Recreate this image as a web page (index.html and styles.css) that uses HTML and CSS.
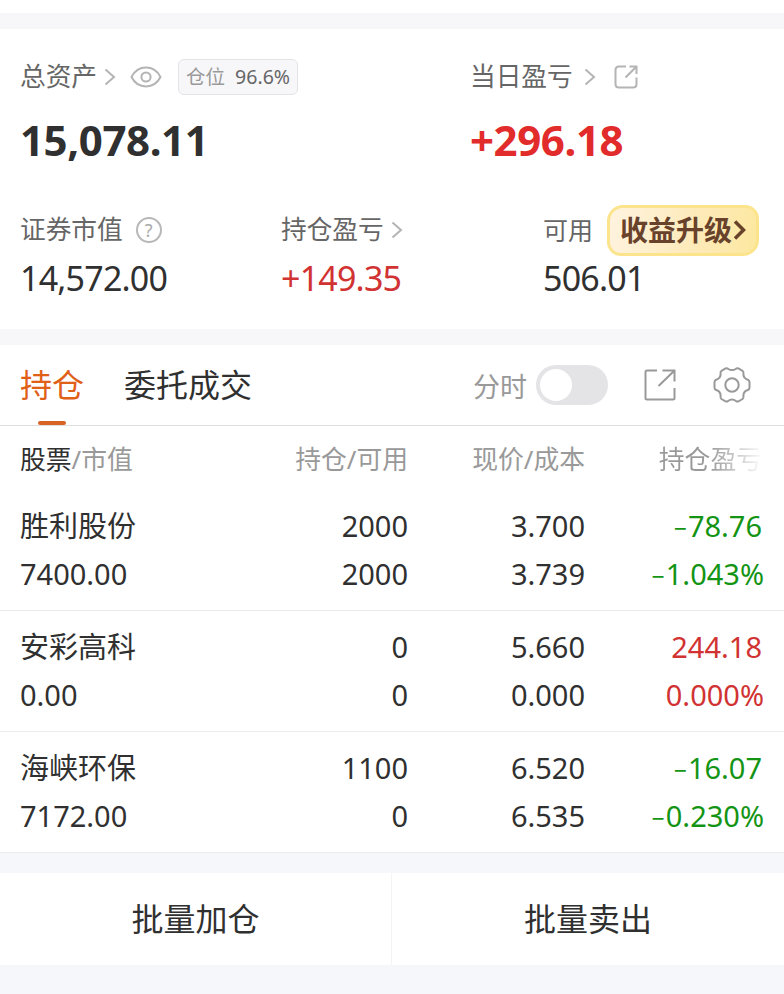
FILE: index.html
```html
<!DOCTYPE html>
<html lang="zh-CN">
<head>
    <meta charset="UTF-8">
    <meta name="viewport" content="width=device-width, initial-scale=1.0">
    <title>持仓</title>
    <link rel="stylesheet" href="styles.css">
</head>
<body>
    <div class="gap gap-top"></div>

    <!-- Account summary -->
    <section class="assets">
        <div class="summary summary-main">
            <div class="item">
                <div class="label">
                    <span>总资产</span>
                    <svg class="arrow arrow-near" width="12" height="18" viewBox="0 0 12 18"><path d="M1.5 1.5 L10 9 L1.5 16.5"/></svg>
                    <svg class="eye" width="32" height="22" viewBox="0 0 32 22"><path d="M1.500 11 C8 -1.600 24 -1.600 30.500 11 C24 23.600 8 23.600 1.500 11 Z"/><circle cx="16" cy="11" r="4.600"/></svg>
                    <span class="position"><span class="position-name">仓位</span>96.6%</span>
                </div>
                <div class="total">15,078.11</div>
            </div>
            <div class="item">
                <div class="label">
                    <span>当日盈亏</span>
                    <svg class="arrow arrow-far" width="12" height="18" viewBox="0 0 12 18"><path d="M1.5 1.5 L10 9 L1.5 16.5"/></svg>
                    <svg class="share" width="24" height="24" viewBox="0 0 24 24"><path d="M12 1.500 H5 Q1.500 1.500 1.500 5 V19 Q1.500 22.500 5 22.500 H19 Q22.500 22.500 22.500 19 V12.500 M15.500 1.500 H22.500 V9 M22 2 L11.500 12.500"/></svg>
                </div>
                <div class="total up">+296.18</div>
            </div>
        </div>
        <div class="summary summary-sub">
            <div class="item">
                <div class="label">
                    <span>证券市值</span>
                    <span class="help">?</span>
                </div>
                <div class="amount">14,572.00</div>
            </div>
            <div class="item">
                <div class="label">
                    <span>持仓盈亏</span>
                    <svg class="arrow arrow-near" width="12" height="18" viewBox="0 0 12 18"><path d="M1.5 1.5 L10 9 L1.5 16.5"/></svg>
                </div>
                <div class="amount amount-up">+149.35</div>
            </div>
            <div class="item">
                <div class="label">
                    <span class="available">可用</span>
                    <span class="upgrade">收益升级<svg width="13" height="22" viewBox="0 0 13 22"><path d="M2 2.500 L10.500 11 L2 19.500"/></svg></span>
                </div>
                <div class="amount">506.01</div>
            </div>
        </div>
    </section>

    <div class="gap"></div>

    <!-- Tabs -->
    <nav class="tabs">
        <div class="tab active">持仓</div>
        <div class="tab">委托成交</div>
        <div class="tools">
            <span>分时</span>
            <span class="switch"></span>
            <svg class="tool-share" width="32" height="32" viewBox="0 0 32 32"><path d="M13 1.500 H3 Q1.500 1.500 1.500 3 V29 Q1.500 30.500 3 30.500 H29 Q30.500 30.500 30.500 29 V19 M18.500 1.500 H30.500 V12.500 M30 2 L14.500 17"/></svg>
            <svg class="tool-gear" width="38" height="38" viewBox="0 0 38 38"><path d="M12.500 2.500 Q14 1.800 15 2.700 Q19 5.500 23 2.700 Q24 1.800 25.500 2.500 L29.500 4.800 Q30.800 5.500 30.400 7.200 Q30 12.500 34.800 13.700 Q36.500 14.300 36.500 16 L36.500 21.500 Q36.500 23.500 34.800 24 Q30 25.500 30.400 30.500 Q30.800 32.300 29.500 33 L25.500 35.300 Q24 36 23 35 Q19 32.200 15 35 Q14 36 12.500 35.300 L8.500 33 Q7.200 32.300 7.600 30.500 Q8 25.500 3.200 24 Q1.500 23.500 1.500 21.500 L1.500 16 Q1.500 14.300 3.200 13.700 Q8 12.500 7.600 7.200 Q7.200 5.500 8.500 4.800 Z"/><circle cx="19" cy="19" r="6.700"/></svg>
        </div>
    </nav>

    <!-- Holdings -->
    <section class="holdings">
        <div class="row head">
            <div><span class="dark">股票</span>/市值</div>
            <div>持仓/可用</div>
            <div>现价/成本</div>
            <div class="fade">持仓盈亏</div>
        </div>
        <div class="row">
            <div><p>胜利股份</p><p>7400.00</p></div>
            <div><p>2000</p><p>2000</p></div>
            <div><p>3.700</p><p>3.739</p></div>
            <div class="down"><p><span class="minus">−</span>78.76</p><p class="rate"><span class="minus">−</span>1.043%</p></div>
        </div>
        <div class="row">
            <div><p>安彩高科</p><p>0.00</p></div>
            <div><p>0</p><p>0</p></div>
            <div><p>5.660</p><p>0.000</p></div>
            <div class="amount-up"><p>244.18</p><p class="rate">0.000%</p></div>
        </div>
        <div class="row">
            <div><p>海峡环保</p><p>7172.00</p></div>
            <div><p>1100</p><p>0</p></div>
            <div><p>6.520</p><p>6.535</p></div>
            <div class="down"><p><span class="minus">−</span>16.07</p><p class="rate"><span class="minus">−</span>0.230%</p></div>
        </div>
    </section>

    <!-- Batch actions -->
    <footer class="actions">
        <div class="action">批量加仓</div>
        <div class="action">批量卖出</div>
    </footer>
</body>
</html>
```
FILE: styles.css
```css
* {
    box-sizing: border-box;
}
body {
    margin: 0;
    padding-top: 13px;
    background: #fff;
    color: #303030;
    font-family: "Noto Sans", "Noto Sans CJK SC", sans-serif;
    font-size: 29px;
    height: 994px;
    overflow: hidden;
}
p {
    margin: 0;
}
svg {
    display: block;
    flex: none;
    fill: none;
    stroke: #b4b4b4;
    stroke-width: 2;
}
.gap {
    height: 16px;
    background: #f7f7fa;
}
.assets {
    height: 300px;
    padding: 28px 0 0 20px;
}
.summary {
    display: grid;
}
.summary-main {
    grid-template-columns: 450px 1fr;
    height: 153px;
}
.summary-sub {
    grid-template-columns: 261px 262px 1fr;
}
.label {
    display: flex;
    align-items: center;
    height: 40px;
    font-size: 25.7px;
    line-height: 40px;
    color: #666;
    white-space: nowrap;
}
.arrow-near {
    margin-left: 7px;
}
.arrow-far {
    margin-left: 11px;
}
.eye {
    margin-left: 14px;
}
.share {
    margin-left: 18px;
}
.position {
    display: flex;
    align-items: center;
    justify-content: center;
    gap: 10px;
    width: 120px;
    height: 36px;
    margin-left: 16px;
    border: 1px solid #e4e4e8;
    border-radius: 6px;
    background: #f7f7fa;
    font-size: 19.5px;
    line-height: 34px;
}
.position-name {
    color: #999;
}
.total {
    margin-top: 14px;
    font-size: 42px;
    font-weight: 700;
    line-height: 58px;
    letter-spacing: -0.4px;
}
.amount {
    margin-top: 7px;
    font-size: 34px;
    line-height: 42px;
    letter-spacing: -0.8px;
}
.up {
    color: #e22b2b;
}
.amount-up {
    color: #d13232;
}
.down {
    color: #149414;
}
.help {
    width: 26px;
    height: 26px;
    margin-left: 13px;
    border: 2px solid #b8b8b8;
    border-radius: 50%;
    color: #aaa;
    font-size: 18px;
    line-height: 22px;
    text-align: center;
}
.available {
    font-size: 25px;
}
.upgrade {
    display: flex;
    align-items: center;
    justify-content: center;
    gap: 1px;
    width: 152px;
    height: 51px;
    margin-left: 14px;
    border: 3px solid #fbe48c;
    border-radius: 16px 14px 16px 14px;
    background: linear-gradient(100deg, #fff3e0, #fdeab8 60%, #fde8a0);
    color: #68422a;
    font-size: 28px;
    font-weight: 700;
}
.upgrade svg {
    stroke: #68422a;
    stroke-width: 3.5;
}
.tabs {
    display: flex;
    height: 81px;
    padding-left: 20px;
    border-bottom: 1px solid #dedede;
}
.tab {
    position: relative;
    margin-right: 40px;
    font-size: 32px;
    line-height: 80px;
}
.active {
    color: #e06018;
}
.active::after {
    content: "";
    position: absolute;
    left: 18px;
    bottom: 0;
    width: 28px;
    height: 4px;
    border-radius: 2px;
    background: #d96325;
}
.tools {
    display: flex;
    align-items: center;
    margin-left: auto;
    padding-right: 33px;
    color: #999;
    font-size: 27px;
}
.tools svg {
    stroke: #999;
}
.switch {
    width: 72px;
    height: 40px;
    margin-left: 9px;
    padding: 4px;
    border-radius: 20px;
    background: #e4e4e6;
}
.switch::before {
    content: "";
    display: block;
    width: 32px;
    height: 32px;
    border-radius: 50%;
    background: #fff;
}
.tool-share {
    margin-left: 36px;
}
.tool-gear {
    margin-left: 37px;
}
.row {
    display: grid;
    grid-template-columns: 201px 187px 177px 177px;
    height: 121px;
    padding: 12px 0 0 20px;
    border-bottom: 1px solid #ececec;
    line-height: 48px;
    text-align: right;
    white-space: nowrap;
}
.row p {
    height: 48px;
}
.row div:first-child {
    text-align: left;
}
.row .rate {
    margin-right: -2px;
}
.minus {
    margin-right: 1px;
    font-size: 23px;
    line-height: 1;
}
.head {
    height: 64px;
    padding-top: 9px;
    border: none;
    color: #999;
    font-size: 25.8px;
}
.dark {
    color: #303030;
}
.fade {
    background: linear-gradient(90deg, #999 70%, #f4f4f4 98%);
    background-clip: text;
    color: transparent;
}
.actions {
    display: flex;
    height: 141px;
    border-top: 20px solid #f6f7fa;
    border-bottom: 29px solid #f6f7fa;
}
.action {
    width: 391px;
    font-size: 32px;
    line-height: 92px;
    text-align: center;
}
.action + .action {
    width: 393px;
    border-left: 1px solid #f4f4f4;
}
```
